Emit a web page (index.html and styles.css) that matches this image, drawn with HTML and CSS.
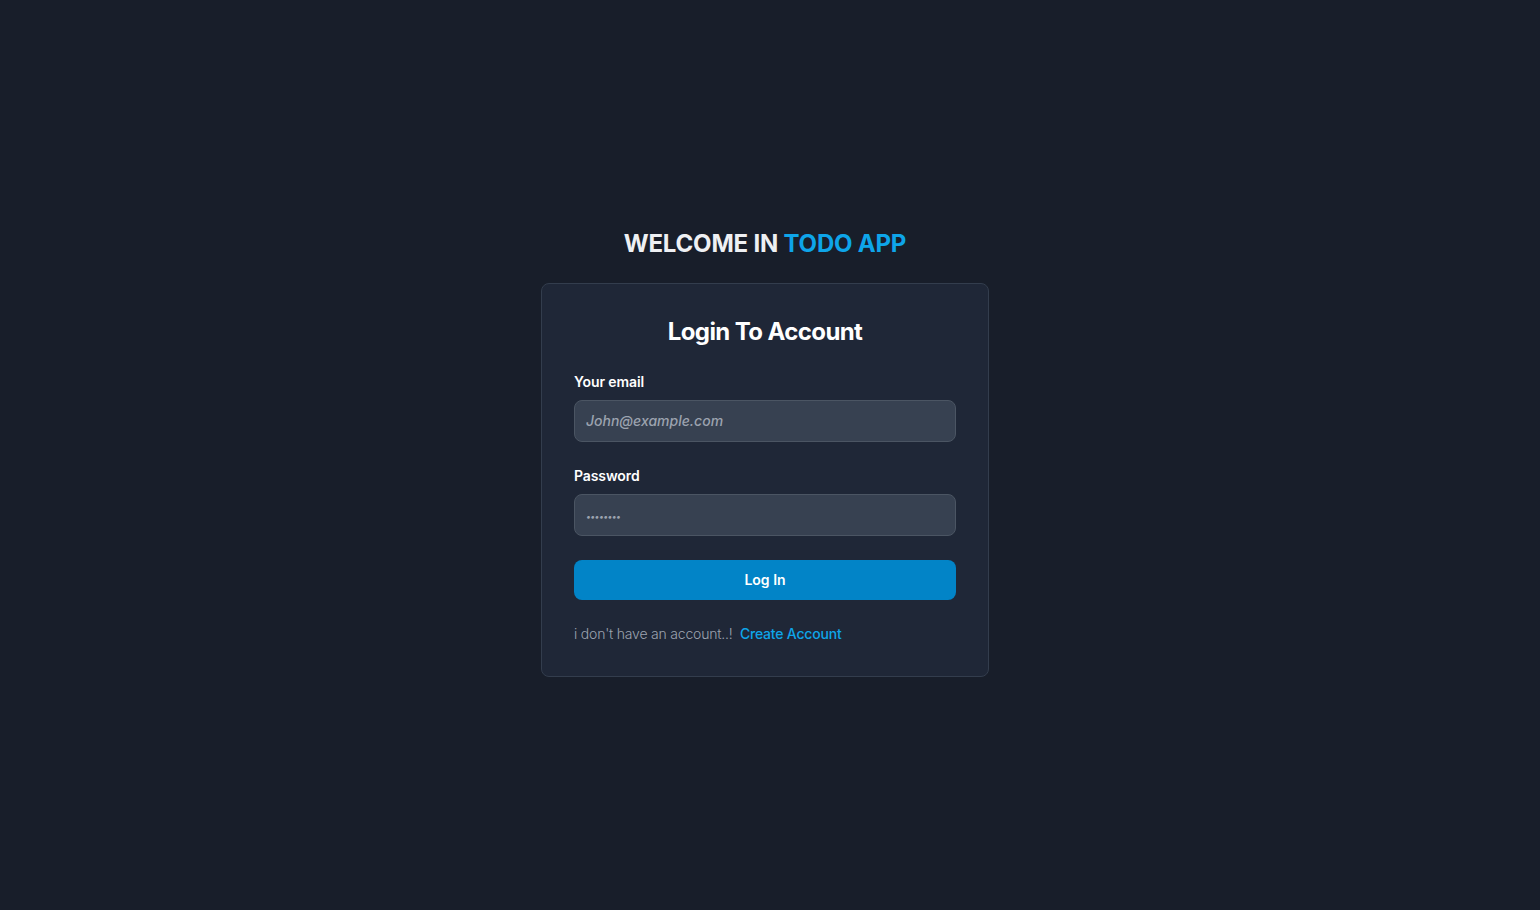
FILE: index.html
```html
<!DOCTYPE html>
<html lang="en">
<head>
<meta charset="utf-8">
<title>Todo App - Login</title>
<link rel="stylesheet" href="styles.css">
</head>
<body>
<main class="page">
  <h1 class="welcome">WELCOME IN <span class="accent">TODO APP</span></h1>
  <div class="card">
    <form class="form">
      <h2 class="card-title">Login To Account</h2>
      <div class="field">
        <label class="label" for="email">Your email</label>
        <input class="input" type="email" id="email" placeholder="John@example.com">
      </div>
      <div class="field">
        <label class="label" for="password">Password</label>
        <input class="input pw" type="password" id="password" placeholder="••••••••">
      </div>
      <button class="btn" type="button">Log In</button>
      <p class="footer">i don't have an account..!&nbsp; <a class="link" href="#">Create Account</a></p>
    </form>
  </div>
</main>
</body>
</html>
```

FILE: styles.css
```css
* { box-sizing: border-box; }
html, body { margin: 0; padding: 0; }
body {
  background: #181e2a;
  font-family: Inter, "Liberation Sans", Arial, sans-serif;
  color: #fff;
}
.page {
  min-height: 910px;
  display: flex;
  flex-direction: column;
  align-items: center;
  justify-content: center;
  padding: 0 10px 4px 0;
}
.welcome {
  margin: 0 0 25px;
  font-size: 24px;
  line-height: 28px;
  font-weight: 700;
  letter-spacing: -0.2px;
  color: #eef0f3;
}
.accent { color: #0ea5e9; }
.card {
  width: 448px;
  background: #1f2737;
  border: 1px solid #333d4d;
  border-radius: 8px;
  padding: 32px;
}
.form {
  display: flex;
  flex-direction: column;
  gap: 24px;
}
.card-title {
  margin: 0;
  text-align: center;
  font-size: 24px;
  line-height: 32px;
  font-weight: 700;
  letter-spacing: -0.6px;
  color: #fff;
}
.field { display: flex; flex-direction: column; }
.label {
  font-size: 14px;
  line-height: 20px;
  font-weight: 600;
  letter-spacing: -0.1px;
  margin-bottom: 8px;
  color: #fff;
}
.input {
  height: 42px;
  background: #374151;
  border: 1px solid #4b5563;
  border-radius: 8px;
  padding: 0 11px;
  font-family: inherit;
  font-size: 14px;
  color: #fff;
  outline: none;
}
.input::placeholder {
  color: #9ca3af;
  font-style: italic;
  font-weight: 500;
}
.input.pw::placeholder {
  font-size: 9px;
  letter-spacing: -0.5px;
}
.btn {
  height: 40px;
  background: #0284c7;
  border: none;
  border-radius: 8px;
  color: #fff;
  font-family: inherit;
  font-size: 14px;
  font-weight: 600;
}
.footer {
  margin: 0;
  font-size: 14px;
  line-height: 20px;
  font-weight: 300;
  letter-spacing: -0.2px;
  color: #9ca3af;
}
.link {
  color: #0ea5e9;
  font-weight: 500;
  text-decoration: none;
}
```
